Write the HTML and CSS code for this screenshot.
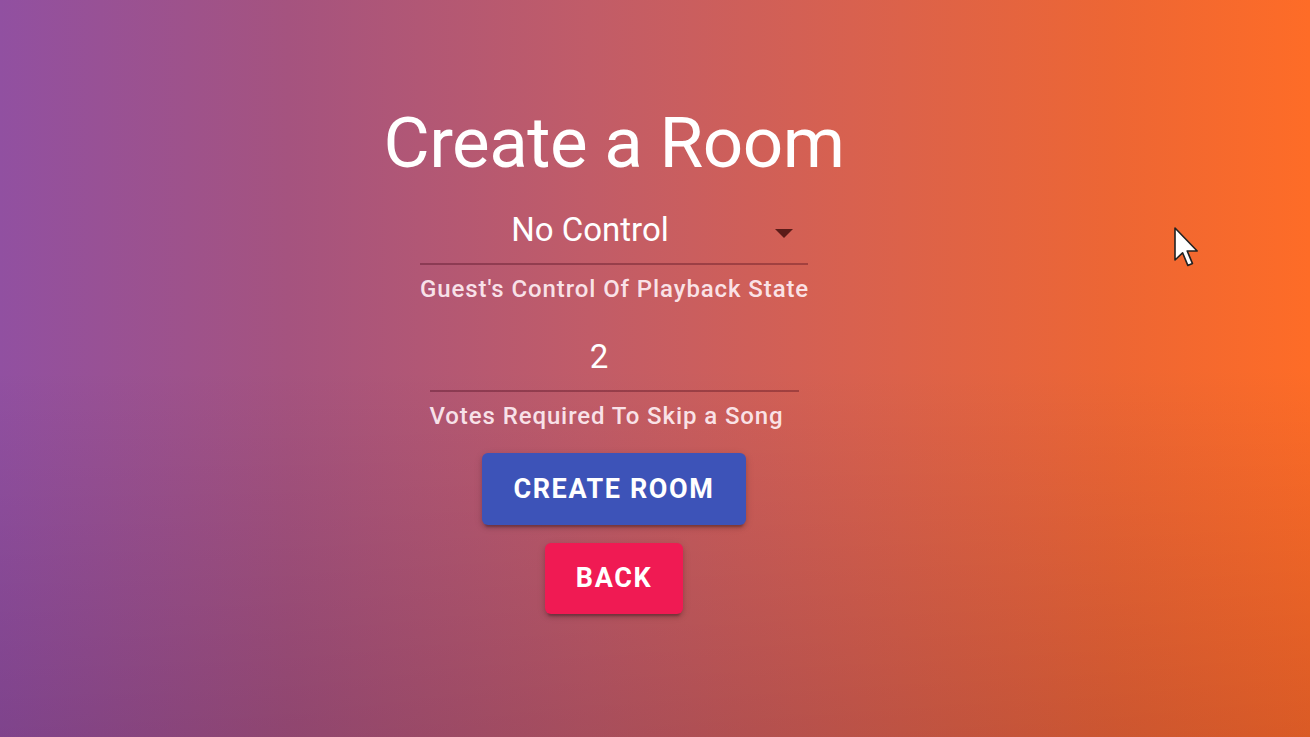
FILE: index.html
```html
<!DOCTYPE html>
<html lang="en">
<head>
  <meta charset="UTF-8" />
  <meta name="viewport" content="width=device-width, initial-scale=1.0"/>
  <title>Create a Room</title>
  <link rel="stylesheet" href="styles.css">
</head>
<body>
  <main class="page">
    <h1 class="title">Create a Room</h1>

    <div class="field select-field">
      <div class="select">
        <span class="select-value">No Control</span>
        <svg class="select-arrow" width="18" height="9" viewBox="0 0 18 9">
          <path d="M0 0 L18 0 L9 9 Z" />
        </svg>
      </div>
      <p class="helper center">Guest's Control Of Playback State</p>
    </div>

    <div class="field number-field">
      <div class="input">
        <span class="input-value">2</span>
      </div>
      <p class="helper">Votes Required To Skip a Song</p>
    </div>

    <button class="btn btn-create">Create Room</button>
    <button class="btn btn-back">Back</button>
  </main>

  <!-- mouse pointer -->
  <svg class="pointer" width="24" height="40" viewBox="0 0 12 20">
    <path d="M0.5 0.5 L0.5 16.5 L4.3 12.9 L6.9 19.2 L9.2 18.2 L6.6 12 L11.6 12 Z"
          fill="#fff" stroke="#222" stroke-width="0.8" stroke-linejoin="round" />
  </svg>
</body>
</html>
```

FILE: styles.css
```css
html, body {
  height: 100%;
}
body {
  margin: 0;
  font-family: Roboto, 'Liberation Sans', sans-serif;
  color: #fff;
  overflow: hidden;
  background:
    linear-gradient(to bottom, rgba(0,0,0,0) 50%, rgba(30,0,30,0.16) 100%),
    linear-gradient(to right, #9150a1 0%, #a5537f 22%, #c15c68 45%, #d8614f 65%, #ed6634 85%, #fe6c27 100%);
}
.page {
  display: flex;
  flex-direction: column;
  align-items: center;
  padding-top: 101px;
  padding-right: 82px;
}
.title {
  margin: 0;
  font-size: 71px;
  font-weight: 400;
  line-height: 1.172;
  letter-spacing: -0.5px;
}
.field {
  display: flex;
  flex-direction: column;
}
.select-field {
  width: 388px;
  margin-top: 27px;
}
.number-field {
  width: 369px;
  margin-top: 35px;
}
.select, .input {
  display: flex;
  align-items: center;
  font-size: 33px;
  line-height: 1.172;
  padding-bottom: 13px;
  border-bottom: 2px solid rgba(60,0,20,0.32);
}
.select-value {
  flex: 1;
  text-align: center;
}
.select-arrow {
  fill: rgba(40,0,0,0.7);
  margin: 5px 15px 0 15px;
}
.input-value {
  flex: 1;
  text-align: center;
  padding-right: 30px;
}
.helper {
  margin: 11px 0 0;
  font-size: 24px;
  font-weight: 500;
  line-height: 1.125;
  letter-spacing: 0.9px;
  color: rgba(255,240,245,0.92);
  white-space: nowrap;
}
.helper.center {
  text-align: center;
}
.btn {
  height: 72px;
  padding: 0 31px;
  border: none;
  border-radius: 6px;
  font-family: Roboto, 'Liberation Sans', sans-serif;
  font-size: 27px;
  font-weight: 700;
  letter-spacing: 1.6px;
  text-transform: uppercase;
  color: #fff;
  cursor: pointer;
  box-shadow: 0 5px 2px -3px rgba(0,0,0,0.2), 0 3px 4px 0 rgba(0,0,0,0.14), 0 2px 9px 0 rgba(0,0,0,0.12);
}
.btn-create {
  margin-top: 23px;
  background-color: #3d53b8;
}
.btn-back {
  margin-top: 18px;
  height: 71px;
  background-color: #f01a53;
}
.pointer {
  position: absolute;
  left: 1174px;
  top: 227px;
}
```
